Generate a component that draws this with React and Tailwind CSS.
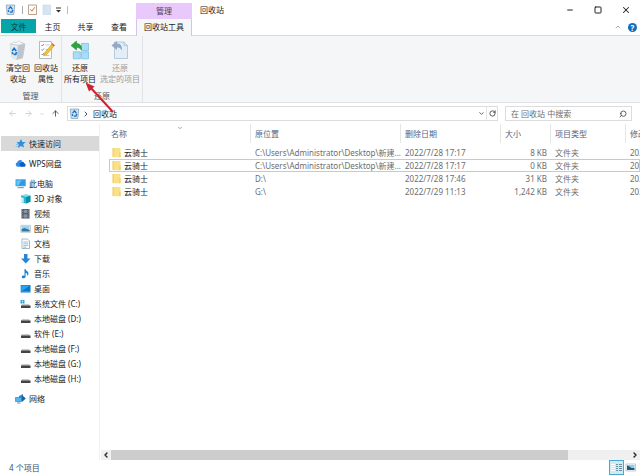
import React, { useState } from 'react';
import { ArrowLeft, ArrowRight, ArrowUp, ChevronDown, ChevronLeft, ChevronRight, ChevronUp, Minus, RotateCw, Search, Square, X } from 'lucide-react';

const files = [
    { name: '云骑士', origin: 'C:\\Users\\Administrator\\Desktop\\新建...', deleted: '2022/7/28 17:17', size: '8 KB', modified: '2022/7/28' },
    { name: '云骑士', origin: 'C:\\Users\\Administrator\\Desktop\\新建...', deleted: '2022/7/28 17:17', size: '0 KB', modified: '2022/7/28' },
    { name: '云骑士', origin: 'D:\\', deleted: '2022/7/28 17:46', size: '31 KB', modified: '2022/7/28' },
    { name: '云骑士', origin: 'G:\\', deleted: '2022/7/29 11:13', size: '1,242 KB', modified: '2022/7/29' },
];

const pcItems = [
    { label: '3D 对象', icon: 'cube' },
    { label: '视频', icon: 'video' },
    { label: '图片', icon: 'picture' },
    { label: '文档', icon: 'document' },
    { label: '下载', icon: 'download' },
    { label: '音乐', icon: 'music' },
    { label: '桌面', icon: 'desktop' },
    { label: '系统文件 (C:)', icon: 'system' },
    { label: '本地磁盘 (D:)', icon: 'drive' },
    { label: '软件 (E:)', icon: 'drive' },
    { label: '本地磁盘 (F:)', icon: 'drive' },
    { label: '本地磁盘 (G:)', icon: 'drive' },
    { label: '本地磁盘 (H:)', icon: 'drive' },
];

const drive = (
    <>
        <path d="M2 6h7l1 2H1z" fill="#c9c9c9" />
        <path d="M1 7.500h9.500v2.500H1z" fill="#444" />
    </>
);

const shapes = {
    star: (
        <>
            <path d="M6 1l1.400 2.900 3.300.1-2.500 2.200.9 3.400-3.100-1.700-3.100 2 .8-3.500L1.500 4.200l3-.2z" fill="#2f8fdc" />
            <path d="M1 6.500h2M.5 8.500h2" stroke="#7bbdf0" strokeWidth=".8" />
        </>
    ),
    cloud: (
        <>
            <path d="M2.500 8.800a2.200 2.200 0 0 1-.4-4.200A3 3 0 0 1 7.300 3L5 5.500 7.500 8.800z" fill="#2d8cf0" />
            <path d="M6 8.800L4.200 6 6.500 4a2 2 0 0 1 2.800 1.200 1.900 1.900 0 0 1 .1 3.600z" fill="#1257c4" />
        </>
    ),
    pc: (
        <>
            <path d="M.8 1.500h9.700v6.500H.8z" fill="#2b9be6" stroke="#6ea8cf" strokeWidth=".6" />
            <path d="M1.500 2.200h5l-3 5h-2z" fill="#62c3fa" />
            <path d="M2.500 9.700h6.300" stroke="#6b8ba4" strokeWidth="1" />
        </>
    ),
    cube: (
        <>
            <path d="M1 2.500L6 1l4.500 1.500v6.300L6 10.500 1 9z" fill="#7fe0ea" />
            <path d="M6 4l4.500-1.500v6.300L6 10.500z" fill="#0b8fa8" />
            <path d="M1 2.500L6 4v6.500L1 9z" fill="#26b9cc" />
            <path d="M1 4l2.700 1v4.800L1 9z" fill="#c3f4f6" />
        </>
    ),
    video: (
        <>
            <path d="M1.500 1h8v9.500h-8z" fill="#4a4f57" />
            <path d="M3.500 1.700h4v3.600h-4zM3.500 6.200h4v3.600h-4z" fill="#8296aa" />
            <path d="M2.400 1.500v9M8.600 1.500v9" stroke="#d8dce0" strokeWidth=".6" strokeDasharray=".8 .9" />
        </>
    ),
    picture: (
        <>
            <path d="M.8 2.300h9.600v7H.8z" fill="#fff" stroke="#9aa7b0" strokeWidth=".6" />
            <path d="M1.600 3h8v5.500h-8z" fill="#9bd4f5" />
            <path d="M1.600 6l3-1 5 2v1.500h-8z" fill="#33779d" />
        </>
    ),
    document: (
        <>
            <path d="M2 1h5.500l2 2v7.500H2z" fill="#fff" stroke="#7d9bb0" strokeWidth=".7" />
            <path d="M3.300 4h5M3.300 5.800h5M3.300 7.600h5M3.300 9.200h3" stroke="#5ba7d6" strokeWidth=".7" />
        </>
    ),
    download: <path d="M4 1h3.500v4.500h3L5.800 10.500 1 5.500h3z" fill="#2585d8" />,
    music: <path d="M4.500 1h1c.2 2 3.300 2.400 3 5-.3 1-.8 1.600-1.400 2 .6-1.700 0-2.600-1.500-3.300v3.500c0 2.700-4 2.700-3.800.8.1-1.300 1.500-1.700 2.700-1.200z" fill="#1684d4" />,
    desktop: (
        <>
            <path d="M.7 2h9.800v7.500H.7z" fill="#0877c9" />
            <path d="M1.200 2.500h8.800L2 8H1.200z" fill="#2aa5ef" />
            <path d="M1.200 8.800h8.800" stroke="#7bd0fa" strokeWidth=".5" />
        </>
    ),
    system: (
        <>
            {drive}
            <path d="M.5 2h1.800v1.700H.5zM2.700 2h1.800v1.700H2.700zM.5 4h1.800v1.500H.5zM2.700 4h1.800v1.500H2.700z" fill="#1ba1e2" />
        </>
    ),
    drive,
    network: (
        <>
            <path d="M4 3l4-2v6.500l-4 1z" fill="#2b8fd8" />
            <path d="M.5 4.500h6v4h-6z" fill="#55b5ee" stroke="#2777ae" strokeWidth=".6" />
            <path d="M7 2l3.800 3.500L7 9z" fill="#1965a8" />
            <path d="M2 10h3.500" stroke="#47799c" strokeWidth=".8" />
        </>
    ),
    bin: (
        <>
            <path d="M1.200 1h8.600l-1 9.500H2.200z" fill="#cfdfeb" stroke="#7c9bb3" strokeWidth=".7" />
            <path d="M3.600 5.200L5.500 2.800l1.800 2.400M7.800 5.800l-.8 2.400H5M4 8L3.100 6" stroke="#1670c2" strokeWidth="1.200" fill="none" />
        </>
    ),
    properties: (
        <>
            <path d="M1.500 1h8v9.500h-8z" fill="#fff" stroke="#aa8b7b" strokeWidth=".8" />
            <path d="M3.200 5.200l1.700 2 3-4" stroke="#d9722e" strokeWidth="1" fill="none" />
        </>
    ),
    sheet: <path d="M2 1h7.500v9.500H2z" fill="#d4e4f3" stroke="#bfd3e6" strokeWidth=".6" />,
    folder: (
        <>
            <path d="M1.500 1h6v9h-6z" fill="#f0c948" />
            <path d="M2.500 1h7v9.300h-7z" fill="#fbe08a" />
            <path d="M8.500 5.500h1v4.800h-1z" fill="#edc653" />
        </>
    ),
};

function Icon({ name }) {
    return (
        <svg viewBox="0 0 11 11" className="w-[11px] h-[11px] shrink-0" aria-hidden="true">
            {shapes[name]}
        </svg>
    );
}

function EmptyBinIcon() {
    return (
        <svg viewBox="0 0 20 20" className="size-5" aria-hidden="true">
            <path d="M2 4l9-2 6 2-2.500 14-6 1.500L4 17z" fill="#dfe4e8" stroke="#b3bcc4" strokeWidth=".6" />
            <path d="M2 4l8 1.500L17 4l-2.500 14-6 1.500z" fill="#bcc5cd" />
            <path d="M2 4l8 1.700-1.500 13.800L4 17z" fill="#e6eaee" />
            <path d="M3 4l3-2 2 .8 3-2 2 1.800 3 1-6 1.500z" fill="#f9fafb" stroke="#bcc3c9" strokeWidth=".5" />
            <path d="M4.200 11l1.900-2.600L8.200 11M8.600 12l-.9 2.300H5.500M4.900 14l-.8-1.800" stroke="#1479cf" strokeWidth="1.700" fill="none" />
        </svg>
    );
}

function PropertiesIcon() {
    return (
        <svg viewBox="0 0 20 20" className="size-5" aria-hidden="true">
            <path d="M3.500 1.500h12v17h-12z" fill="#fff" stroke="#a9a9a9" strokeWidth=".8" />
            <path d="M5.500 5l.9 1L8 4M5.500 9.500l.9 1L8 8.500M5.500 14l.9 1L8 13" stroke="#55728f" strokeWidth=".8" fill="none" />
            <path d="M9.500 5h4M9.500 9.500h3M9.500 15.500h4" stroke="#b5bac0" strokeWidth=".8" />
            <path d="M16.500 3.500l2.200 1.700-8.200 9.600-3 1.200.9-3z" fill="#f3c332" stroke="#b98b1c" strokeWidth=".5" />
            <path d="M16.500 3.500l2.200 1.700-1 1.200-2.200-1.800z" fill="#dd6d62" />
        </svg>
    );
}

function RestoreAllIcon() {
    return (
        <svg viewBox="0 0 20 20" className="size-5" aria-hidden="true">
            <g fill="#abdcf6" stroke="#75bbe0" strokeWidth=".7">
                <path d="M11.500 3.500h7v7h-7zM11.500 11.800h7v7h-7zM3.300 11.800h7v7h-7z" />
            </g>
            <path d="M1 5.500L6.500 1v2.500c3.500 0 5.500 2.300 4.800 6.500C10 8 8.800 7.500 6.500 7.500V10z" fill="#2ca53c" stroke="#16842a" strokeWidth=".5" />
        </svg>
    );
}

function RestoreSelectedIcon() {
    return (
        <svg viewBox="0 0 20 20" className="size-5" aria-hidden="true">
            <path d="M4.500 2h9.500l3.500 3.500v13h-13z" fill="#e3edf8" stroke="#a8bfd6" strokeWidth=".8" />
            <path d="M14 2v3.500h3.500" fill="none" stroke="#a8bfd6" strokeWidth=".8" />
            <path d="M1.500 5.500L7 1v2.500c3.500 0 5.500 2.300 4.800 7C10.500 8 9.300 7.500 7 7.500V10z" fill="#91a9c4" />
        </svg>
    );
}

function RibbonButton({ icon, lines, disabled }) {
    return (
        <button type="button" disabled={disabled} className="flex flex-col items-center px-[2px] leading-[11px] whitespace-nowrap disabled:text-[#9b9b9b]">
            {icon}
            <span className="mt-[2px]">{lines[0]}</span>
            <span>{lines[1]}</span>
        </button>
    );
}

function RibbonGroup({ label, children }) {
    return (
        <section className="flex flex-col justify-between border-r border-[#e1e3e6] pt-1 pb-px">
            <div className="flex">{children}</div>
            <h2 className="text-center leading-[11px] text-[#555]">{label}</h2>
        </section>
    );
}

function TitleBar() {
    return (
        <header className="flex h-[19px] shrink-0">
            <div className="flex w-[136px] items-center gap-[6px] pl-[5px]">
                <Icon name="bin" />
                <span className="h-2 w-px bg-[#aaa]" />
                <button type="button" aria-label="属性" className="-ml-[2px]"><Icon name="properties" /></button>
                <button type="button" aria-label="新建" className="-ml-[3px]"><Icon name="sheet" /></button>
                <button type="button" aria-label="自定义快速访问工具栏" className="-ml-[2px]">
                    <svg viewBox="0 0 5 6" className="w-[5px] h-[6px]"><path d="M0 .5h5v1H0zM0 3h5L2.500 5.500z" fill="#333" /></svg>
                </button>
                <span className="h-2 w-px bg-[#bbb]" />
            </div>
            <div className="mt-[3px] flex w-14 items-center justify-center bg-[#e9c9fb] pb-[2px] text-[#4e3b5c]">管理</div>
            <h1 className="flex items-center pl-2">回收站</h1>
            <div className="ml-auto flex">
                <button type="button" aria-label="最小化" className="flex w-7 items-center justify-center"><Minus className="size-2" strokeWidth={3} /></button>
                <button type="button" aria-label="最大化" className="flex w-7 items-center justify-center"><Square className="size-2" strokeWidth={3} /></button>
                <button type="button" aria-label="关闭" className="flex w-7 items-center justify-center"><X className="size-[10px]" strokeWidth={2.5} /></button>
            </div>
        </header>
    );
}

function TabBar() {
    return (
        <nav className="flex h-[17px] shrink-0 border-b border-[#dcd6e4] pl-px">
            <button type="button" className="mb-[2px] w-[35px] bg-[#07a5a8] text-[#063c3e]">文件</button>
            <button type="button" className="w-[33px] pb-[2px]">主页</button>
            <button type="button" className="w-[33px] pb-[2px]">共享</button>
            <button type="button" className="w-[34px] pb-[2px]">查看</button>
            <button type="button" className="-mb-px w-14 border-x border-[#d9c2e8] bg-[#f5f6f7] pb-[2px]">回收站工具</button>
            <div className="ml-auto flex items-center gap-[6px] pr-[3px]">
                <button type="button" aria-label="折叠功能区"><ChevronUp className="size-2 text-[#888]" /></button>
                <button type="button" aria-label="帮助" className="size-[9px] rounded-full bg-[#0d6fc0] text-[8px] leading-[9px] font-bold text-white">?</button>
            </div>
        </nav>
    );
}

function AddressBar() {
    const [query, setQuery] = useState('');

    return (
        <div className="flex h-[21px] shrink-0 items-center pr-2 pl-2">
            <div className="flex w-[59px] shrink-0 items-center gap-[7px]">
                <button type="button" aria-label="后退"><ArrowLeft className="size-[9px] text-[#c4c4c4]" /></button>
                <button type="button" aria-label="前进"><ArrowRight className="size-[9px] text-[#c4c4c4]" /></button>
                <button type="button" aria-label="最近浏览的位置" className="-mx-px"><ChevronDown className="size-[6px] text-[#b4b4b4]" /></button>
                <button type="button" aria-label="上移"><ArrowUp className="size-[9px] text-[#555]" strokeWidth={2.5} /></button>
            </div>
            <div className="flex h-[15px] flex-1 items-center border border-[#dcdcdc] pl-px">
                <Icon name="bin" />
                <ChevronRight className="mx-[2px] size-2 text-[#555]" strokeWidth={3} />
                <button type="button" className="ml-px">回收站</button>
                <button type="button" aria-label="历史记录" className="ml-auto mr-px"><ChevronDown className="size-[7px] text-[#555]" strokeWidth={3} /></button>
                <button type="button" aria-label="刷新" className="flex h-full w-[11px] items-center justify-center border-l border-[#e3e3e3]"><RotateCw className="size-[7px] text-[#444]" strokeWidth={3} /></button>
            </div>
            <label className="ml-[7px] flex h-[15px] w-[127px] shrink-0 items-center border border-[#dcdcdc] pr-1 pl-[5px]">
                <input
                    value={query}
                    onChange={e => setQuery(e.target.value)}
                    aria-label="搜索"
                    placeholder="在 回收站 中搜索"
                    className="min-w-0 flex-1 leading-[13px] outline-none placeholder:text-[#6d6d6d]"
                />
                <Search className="size-2 -scale-x-100 text-[#444]" strokeWidth={2.5} />
            </label>
        </div>
    );
}

function Sidebar() {
    return (
        <nav className="flex w-[99px] shrink-0 flex-col pt-[12px] pl-px whitespace-nowrap">
            <a href="#quick" className="flex h-[15px] items-center gap-[3px] bg-[#d9d9d9] pl-[14px]"><Icon name="star" />快速访问</a>
            <a href="#wps" className="mt-[5px] flex h-[15px] items-center gap-[3px] pl-[14px]"><Icon name="cloud" />WPS网盘</a>
            <a href="#pc" className="mt-[5px] flex h-[15px] items-center gap-[3px] pl-[14px]"><Icon name="pc" />此电脑</a>
            {pcItems.map(item => (
                <a key={item.label} href="#pc" className="flex h-[15px] items-center gap-[3px] pl-[19px]">
                    <Icon name={item.icon} />{item.label}
                </a>
            ))}
            <a href="#network" className="mt-[5px] flex h-[15px] items-center gap-[3px] pl-[14px]"><Icon name="network" />网络</a>
        </nav>
    );
}

function FileTable() {
    return (
        <div className="relative min-h-0 flex-1 overflow-hidden pl-2">
            <ChevronUp className="absolute top-px left-[76px] size-[6px] rotate-180 text-[#888]" strokeWidth={3} />
            <table className="w-full table-fixed border-separate border-spacing-0 whitespace-nowrap">
                <colgroup>
                    <col className="w-[142px]" />
                    <col className="w-[150px]" />
                    <col className="w-[100px]" />
                    <col className="w-[50px]" />
                    <col className="w-[75px]" />
                    <col />
                </colgroup>
                <thead className="text-left text-[#50657f]">
                    <tr className="h-[19px]">
                        <th className="border-r border-[#e5e5e5] pl-[2px] font-normal">名称</th>
                        <th className="border-r border-[#e5e5e5] pl-1 font-normal">原位置</th>
                        <th className="border-r border-[#e5e5e5] pl-1 font-normal">删除日期</th>
                        <th className="border-r border-[#e5e5e5] pl-1 font-normal">大小</th>
                        <th className="border-r border-[#e5e5e5] pl-1 font-normal">项目类型</th>
                        <th className="overflow-hidden pl-1 font-normal">修改日期</th>
                    </tr>
                </thead>
                <tbody className="text-[#6d6d6d] before:block before:h-[3px]">
                    {files.map((f, i) => (
                        <tr key={i} className={i === 1 ? 'h-[13px] outline outline-[#a9d3e8] -outline-offset-1' : 'h-[13px]'}>
                            <td className="pl-[2px] text-[#1a1a1a]">
                                <span className="flex items-center gap-[2px]"><Icon name="folder" />{f.name}</span>
                            </td>
                            <td className="pl-1">{f.origin}</td>
                            <td className="pl-1">{f.deleted}</td>
                            <td className="pr-1 text-right">{f.size}</td>
                            <td className="pl-1">文件夹</td>
                            <td className="overflow-hidden pl-1">{f.modified}</td>
                        </tr>
                    ))}
                </tbody>
            </table>
        </div>
    );
}

function StatusBar() {
    return (
        <footer className="flex h-[15px] shrink-0 items-center pr-1 pl-[9px] text-[#34506f]">
            <span>4 个项目</span>
            <button type="button" aria-label="详细信息" className="ml-auto flex h-[15px] w-[15px] items-center justify-center border border-[#48a9cf] bg-[#cdeaf6]">
                <svg viewBox="0 0 11 9" className="w-[11px] h-[9px]">
                    <path d="M0 1.500h4M0 3.500h4M0 5.500h4M0 7.500h4" stroke="#fff" />
                    <path d="M5 1.500h2M8 1.500h3M5 3.500h2M8 3.500h3M5 5.500h2M8 5.500h3M5 7.500h2M8 7.500h3" stroke="#56788b" strokeWidth=".8" />
                </svg>
            </button>
            <button type="button" aria-label="大缩略图" className="ml-px">
                <svg viewBox="0 0 11 9" className="w-[11px] h-[9px]">
                    <path d="M1 1h9.500v7H1z" fill="#fff" stroke="#9db9c9" strokeWidth=".7" />
                    <path d="M2 2h7.500v3H2z" fill="#8dccf0" />
                    <path d="M2 2.500l2.500 1 2 1.500h3v2H2z" fill="#285879" />
                </svg>
            </button>
        </footer>
    );
}

export default function App() {
    return (
        <div className="relative flex h-screen flex-col overflow-hidden bg-white font-['Noto_Sans','Noto_Sans_CJK_SC',sans-serif] text-[8px] leading-[11px] text-[#222]">
            <TitleBar />
            <TabBar />
            <div className="flex h-[67px] shrink-0 border-b border-[#e1e3e6] bg-[#f5f6f7]">
                <RibbonGroup label="管理">
                    <div className="flex pr-px pl-1">
                        <RibbonButton icon={<EmptyBinIcon />} lines={['清空回', '收站']} />
                        <RibbonButton icon={<PropertiesIcon />} lines={['回收站', '属性']} />
                    </div>
                </RibbonGroup>
                <RibbonGroup label="还原">
                    <RibbonButton icon={<RestoreAllIcon />} lines={['还原', '所有项目']} />
                    <RibbonButton icon={<RestoreSelectedIcon />} lines={['还原', '选定的项目']} disabled />
                </RibbonGroup>
            </div>
            <AddressBar />
            <div className="flex min-h-0 flex-1">
                <Sidebar />
                <main className="flex min-w-0 flex-1 flex-col border-l border-[#f0f0f0] pl-px">
                    <FileTable />
                    <div className="flex h-[10px] shrink-0 items-center bg-[#f0f0f0]">
                        <button type="button" aria-label="向左滚动" className="flex w-[10px] shrink-0 justify-center"><ChevronLeft className="size-2" strokeWidth={4} /></button>
                        <div className="h-full flex-1"><div className="h-full w-[88%] bg-[#cdcdcd]" /></div>
                        <button type="button" aria-label="向右滚动" className="flex w-[10px] shrink-0 justify-center"><ChevronRight className="size-2" strokeWidth={4} /></button>
                    </div>
                </main>
            </div>
            <StatusBar />
            {/* red pointer to the restore-all button */}
            <svg viewBox="0 0 32 34" className="pointer-events-none absolute top-[81px] left-[84px] h-[34px] w-8" aria-hidden="true">
                <path d="M6 6l23 25" stroke="#d2202f" strokeWidth="2" />
                <path d="M1.500 1.500l9 4-5.500 5z" fill="#d2202f" />
            </svg>
        </div>
    );
}
